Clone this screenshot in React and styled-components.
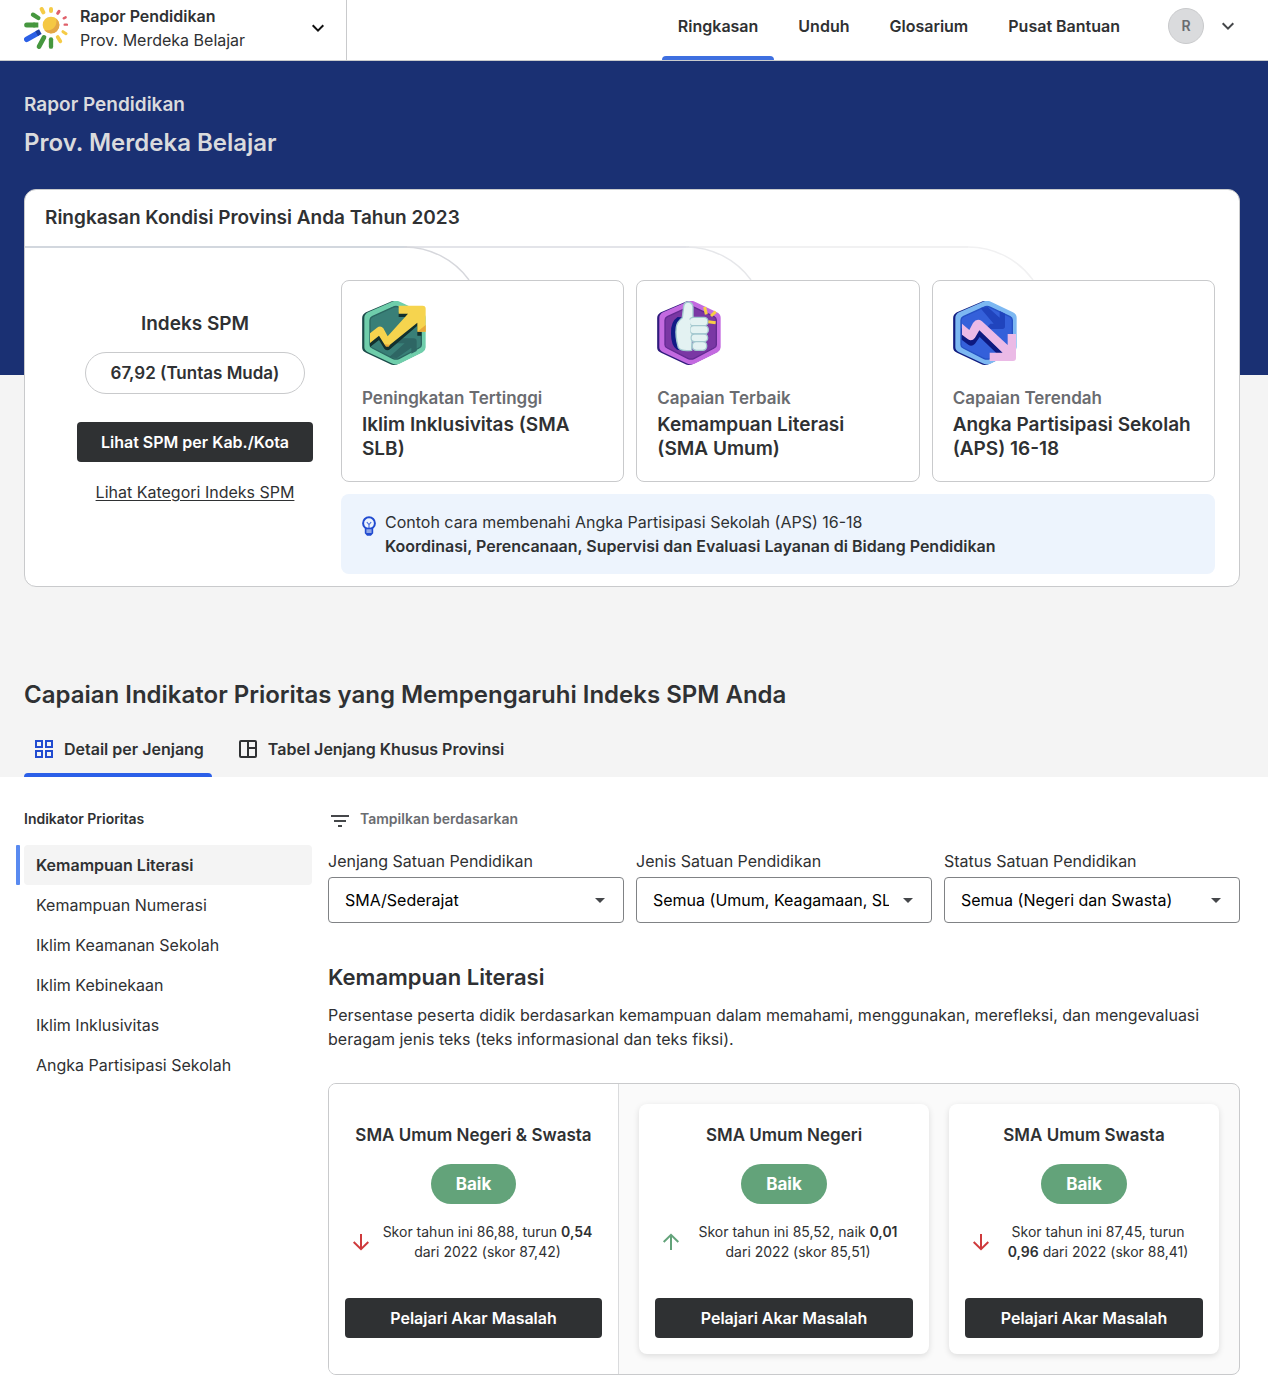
import React, {useState} from 'react';
import styled, {createGlobalStyle} from 'styled-components';

const navItems = ["Ringkasan", "Unduh", "Glosarium", "Pusat Bantuan"];

const indicators = [
    "Kemampuan Literasi",
    "Kemampuan Numerasi",
    "Iklim Keamanan Sekolah",
    "Iklim Kebinekaan",
    "Iklim Inklusivitas",
    "Angka Partisipasi Sekolah",
];

const filters = [
    {id: "jenjang", label: "Jenjang Satuan Pendidikan", options: ["SMA/Sederajat"]},
    {id: "jenis", label: "Jenis Satuan Pendidikan", options: ["Semua (Umum, Keagamaan, SLB)"]},
    {id: "status", label: "Status Satuan Pendidikan", options: ["Semua (Negeri dan Swasta)"]},
];

const Logo = () => (
    <svg width="44" height="43" viewBox="0 0 132 129" fill="none" aria-hidden="true">
        <g stroke="#46973f">
            <path d="M8 54H30" strokeWidth="15" strokeLinecap="round" />
            <path d="M28 54H43" strokeWidth="15" />
            <path d="M27 23L43 33" strokeWidth="13" strokeLinecap="round" />
            <path d="M45 119L60 91" strokeWidth="14" strokeLinecap="round" />
            <path d="M81 119V97" strokeWidth="13" strokeLinecap="round" />
        </g>
        <path d="M8 97L40 79" stroke="#2c60e6" strokeWidth="16" strokeLinecap="round" />
        <path d="M38 80L49 74" stroke="#1b3fa6" strokeWidth="16" />
        <g stroke="#f5cb46" strokeLinecap="round">
            <path d="M53 6L58 16" strokeWidth="12" />
            <path d="M81 6V12" strokeWidth="12" />
            <path d="M109 103L101 90" strokeWidth="11" />
            <path d="M126 80L117 74" strokeWidth="9" />
        </g>
        <g stroke="#e0606a" strokeLinecap="round">
            <path d="M105 13L101 19" strokeWidth="9" />
            <path d="M125 31L119 34" strokeWidth="7" />
            <path d="M129 53H122" strokeWidth="7" />
        </g>
        <circle cx="81" cy="54" r="25" fill="#f5c843" />
        <path d="M97 35A25 25 0 1 1 61 69C86 74 100 58 97 35Z" fill="#e3a646" />
    </svg>
);

const Chevron = ({color}) => (
    <svg width="24" height="24" viewBox="0 0 24 24" fill="none" stroke={color} strokeWidth="2" aria-hidden="true">
        <path d="M6.7 9.3L12 14.6L17.3 9.3" />
    </svg>
);

const HEX = "M92 6Q102 1 112 6L178 37Q187 41 187 50V139Q187 146 180 150L112 184Q102 189 92 184L20 150Q11 146 11 139V50Q11 42 20 37Z";

const HexBase = ({back, rim, line, fill, children}) => (
    <svg width="64" height="64" viewBox="0 0 192 192" fill="none" aria-hidden="true">
        <path d={HEX} transform="translate(-6 1)" fill={back} stroke={back} strokeWidth="9" />
        <path d={HEX} fill={rim} stroke={rim} strokeWidth="8" />
        <path d="M92 19Q102 14 112 19L171 47Q178 51 178 58V131Q178 138 171 141L112 172Q102 177 92 172L31 141Q24 138 24 131V58Q24 51 31 47Z" fill={fill} stroke={line} strokeWidth="4" />
        {children}
    </svg>
);

const RiseBadge = () => (
    <HexBase back="#1b4a49" rim="#6fceab" line="#2b6661" fill="#397f77">
        <path d="M82 168L128 127H104L112 112H155Q164 112 164 121V150L148 158V140L104 172Z" fill="#2e6664" />
        <path d="M24 110L50 92L62 93L77 120L138 62V48H110V34H178V104H166V74L84 145Q75 152 67 143L51 117L24 138Z" fill="#12302e" />
        <path d="M24 97L45 80Q56 72 64 82L77 106L138 38H110V14H182Q191 14 191 23V92H166V65L84 131Q74 139 67 130L51 104L24 126Z" fill="#f6d44e" />
        <path d="M166 92L191 72V92Z" fill="#e8a83a" />
        <path d="M67 130L84 131L80 137H72Z" fill="#e8a83a" />
    </HexBase>
);

const BestBadge = () => (
    <HexBase back="#2f1b7c" rim="#c36ae0" line="#632a92" fill="#7a37a4">
        <path d="M62 48Q40 62 42 98Q42 134 60 146L90 150V50Z" fill="#111b86" />
        <g fill="#e3f2f2" stroke="#a3c8cf" strokeWidth="4">
            <path d="M80 16Q82 3 94 3Q106 4 108 18V48L104 148Q72 152 64 140Q54 104 58 78Q60 62 76 50Z" />
            <rect x="97" y="49" width="56" height="25" rx="12" />
            <rect x="99" y="74" width="55" height="25" rx="12" />
            <rect x="102" y="99" width="50" height="23" rx="11" />
            <rect x="106" y="122" width="43" height="26" rx="12" />
        </g>
        <path d="M84 50L100 56V140L74 138Q62 100 84 50Z" fill="#e3f2f2" />
        <g stroke="#f6cf45" strokeWidth="9">
            <path d="M143 18L148 40" />
            <path d="M176 32L162 45" />
            <path d="M154 62L176 65" />
        </g>
    </HexBase>
);

const LowBadge = () => (
    <HexBase back="#111c80" rim="#7db8f2" line="#2450c4" fill="#3460da">
        <path d="M82 21L104 18L140 50V30L156 38V76Q156 84 148 84H96L112 68H122Z" fill="#2044bd" />
        <path d="M26 82L52 104L79 82L152 158H132L80 108L66 128Q56 138 46 131L26 116Z" fill="#0d1980" />
        <path d="M27 68L49 87L60 66Q72 50 87 61L164 132V99H189V171Q189 180 180 180H110V155H149L79 88L66 110Q57 122 45 115L27 101Z" fill="#ebbae6" />
    </HexBase>
);

const RailLines = () => (
    <Rails width="1020" height="34" viewBox="0 0 1020 34" fill="none" aria-hidden="true">
        <path d="M660 1H943" stroke="#f1f1f2" strokeWidth="2" />
        <path d="M378 1H664" stroke="#e3e4e9" strokeWidth="2" />
        <path d="M0 1H382" stroke="#d2d7de" strokeWidth="2" />
        <path d="M379 1A80 80 0 0 1 444 34" stroke="#d6d7dc" strokeWidth="1.5" />
        <path d="M661 1A80 80 0 0 1 726 34" stroke="#e6e7ea" strokeWidth="1.5" />
        <path d="M943 1A80 80 0 0 1 1008 34" stroke="#f1f1f2" strokeWidth="1.5" />
    </Rails>
);

const BulbIcon = () => (
    <svg width="16" height="20" viewBox="0 0 16 20" fill="none" aria-hidden="true">
        <circle cx="8" cy="7.2" r="5.9" stroke="#214bd0" strokeWidth="2" />
        <path d="M5.8 6L8 8.6L10.2 6M8 8.6V12" stroke="#4468d8" strokeWidth="1.1" />
        <path d="M4.6 12.5H11.4V17L9.6 19H6.4L4.6 17Z" fill="#8fa5e6" stroke="#214bd0" strokeWidth="1.6" />
        <path d="M5 17H11L9.6 19H6.4Z" fill="#214bd0" />
    </svg>
);

const GridIcon = () => (
    <svg width="24" height="24" viewBox="0 0 24 24" fill="none" stroke="#214bd0" strokeWidth="2" aria-hidden="true">
        <rect x="4" y="4" width="6" height="6" />
        <rect x="14" y="4" width="6" height="6" />
        <rect x="4" y="14" width="6" height="6" />
        <rect x="14" y="14" width="6" height="6" />
    </svg>
);

const TableIcon = () => (
    <svg width="24" height="24" viewBox="0 0 24 24" fill="none" stroke="#2f3133" strokeWidth="2" aria-hidden="true">
        <rect x="4" y="4" width="16" height="16" rx="1" />
        <path d="M12 4V20M12 11H20" />
    </svg>
);

const FilterIcon = () => (
    <svg width="24" height="24" viewBox="0 0 24 24" fill="none" stroke="#45474a" strokeWidth="2" aria-hidden="true">
        <path d="M3 9H21M6 14H18M10 19H14" />
    </svg>
);

const TrendIcon = ({up}) => (
    <svg width="24" height="24" viewBox="0 0 24 24" fill="none" stroke={up ? "#63a37a" : "#cf3a3c"} strokeWidth="2" aria-hidden="true">
        {up ? <path d="M12 20V5M4.7 12L12 4.8L19.3 12" /> : <path d="M12 4V19M4.7 12L12 19.2L19.3 12" />}
    </svg>
);

const highlights = [
    {icon: <RiseBadge />, label: "Peningkatan Tertinggi", title: "Iklim Inklusivitas (SMA SLB)"},
    {icon: <BestBadge />, label: "Capaian Terbaik", title: "Kemampuan Literasi (SMA Umum)"},
    {icon: <LowBadge />, label: "Capaian Terendah", title: "Angka Partisipasi Sekolah (APS) 16-18"},
];

const ScoreContent = ({title, up, before, diff, after}) => (
    <>
        <ScoreTitle>{title}</ScoreTitle>
        <ScoreBadge>Baik</ScoreBadge>
        <ScoreRow>
            <TrendIcon up={up} />
            <ScoreText>{before} <strong>{diff}</strong> {after}</ScoreText>
        </ScoreRow>
        <DarkButton type="button">Pelajari Akar Masalah</DarkButton>
    </>
);

const App = () => {
    const [indicator, setIndicator] = useState(indicators[0]);
    const [tab, setTab] = useState("detail");

    return (
        <>
            <GlobalStyle />
            <Header>
                <Switcher type="button">
                    <Logo />
                    <SwitcherText>
                        <strong>Rapor Pendidikan</strong>
                        <span>Prov. Merdeka Belajar</span>
                    </SwitcherText>
                    <Chevron color="#111111" />
                </Switcher>
                <Nav>
                    {navItems.map((item, i) => (
                        <NavLink href="#" key={item} $active={i === 0}>{item}</NavLink>
                    ))}
                </Nav>
                <Account type="button" aria-label="Akun">
                    <Avatar>R</Avatar>
                    <Chevron color="#45474a" />
                </Account>
            </Header>

            <Top>
                <HeroLabel>Rapor Pendidikan</HeroLabel>
                <HeroTitle>Prov. Merdeka Belajar</HeroTitle>

                <Summary>
                    <SummaryTitle>Ringkasan Kondisi Provinsi Anda Tahun 2023</SummaryTitle>
                    <SummaryBody>
                        <RailLines />
                        <IndexColumn>
                            <IndexTitle>Indeks SPM</IndexTitle>
                            <IndexPill>67,92 (Tuntas Muda)</IndexPill>
                            <DarkButton type="button">Lihat SPM per Kab./Kota</DarkButton>
                            <IndexLink href="#">Lihat Kategori Indeks SPM</IndexLink>
                        </IndexColumn>
                        <Highlights>
                            {highlights.map((h) => (
                                <HighlightCard key={h.label}>
                                    {h.icon}
                                    <HighlightLabel>{h.label}</HighlightLabel>
                                    <HighlightTitle>{h.title}</HighlightTitle>
                                </HighlightCard>
                            ))}
                            <Tip>
                                <BulbIcon />
                                <p>
                                    Contoh cara membenahi Angka Partisipasi Sekolah (APS) 16-18<br />
                                    <strong>Koordinasi, Perencanaan, Supervisi dan Evaluasi Layanan di Bidang Pendidikan</strong>
                                </p>
                            </Tip>
                        </Highlights>
                    </SummaryBody>
                </Summary>

                <SectionTitle>Capaian Indikator Prioritas yang Mempengaruhi Indeks SPM Anda</SectionTitle>
                <Tabs role="tablist">
                    <Tab type="button" role="tab" aria-selected={tab === "detail"} $active={tab === "detail"} onClick={() => setTab("detail")}>
                        <GridIcon />
                        Detail per Jenjang
                    </Tab>
                    <Tab type="button" role="tab" aria-selected={tab === "tabel"} $active={tab === "tabel"} onClick={() => setTab("tabel")}>
                        <TableIcon />
                        Tabel Jenjang Khusus Provinsi
                    </Tab>
                </Tabs>
            </Top>

            <Content>
                <aside>
                    <SmallTitle>Indikator Prioritas</SmallTitle>
                    <IndicatorList>
                        {indicators.map((name) => (
                            <li key={name}>
                                <IndicatorButton type="button" $active={name === indicator} onClick={() => setIndicator(name)}>
                                    {name}
                                </IndicatorButton>
                            </li>
                        ))}
                    </IndicatorList>
                </aside>
                <main>
                    <FilterHeading>
                        <FilterIcon />
                        Tampilkan berdasarkan
                    </FilterHeading>
                    <Filters>
                        {filters.map((f) => (
                            <Field key={f.id}>
                                <label htmlFor={f.id}>{f.label}</label>
                                <SelectWrap>
                                    <Select id={f.id}>
                                        {f.options.map((o) => <option key={o}>{o}</option>)}
                                    </Select>
                                    <svg width="10" height="5" viewBox="0 0 10 5" aria-hidden="true">
                                        <path d="M0 0H10L5 5Z" fill="#45474a" />
                                    </svg>
                                </SelectWrap>
                            </Field>
                        ))}
                    </Filters>

                    <IndicatorTitle>Kemampuan Literasi</IndicatorTitle>
                    <Description>
                        Persentase peserta didik berdasarkan kemampuan dalam memahami, menggunakan, merefleksi, dan mengevaluasi beragam jenis teks (teks informasional dan teks fiksi).
                    </Description>

                    <ScorePanel>
                        <MainScore>
                            <ScoreContent title="SMA Umum Negeri & Swasta" before="Skor tahun ini 86,88, turun" diff="0,54" after="dari 2022 (skor 87,42)" />
                        </MainScore>
                        <SubScores>
                            <ScoreCard>
                                <ScoreContent up title="SMA Umum Negeri" before="Skor tahun ini 85,52, naik" diff="0,01" after="dari 2022 (skor 85,51)" />
                            </ScoreCard>
                            <ScoreCard>
                                <ScoreContent title="SMA Umum Swasta" before="Skor tahun ini 87,45, turun" diff="0,96" after="dari 2022 (skor 88,41)" />
                            </ScoreCard>
                        </SubScores>
                    </ScorePanel>
                </main>
            </Content>
        </>
    );
}

const GlobalStyle = createGlobalStyle`
    * {
        box-sizing: border-box;
        margin: 0;
        padding: 0;
    }
    body {
        font-family: Inter, "Liberation Sans", sans-serif;
        font-size: 16px;
        line-height: 24px;
        color: #2f3133;
        background: #ffffff;
    }
    button, select {
        font: inherit;
        color: inherit;
        border: 0;
        background: none;
        cursor: pointer;
    }
    strong {
        font-weight: 600;
    }
    svg {
        display: block;
        flex-shrink: 0;
    }
`;
const Header = styled.header`
    display: flex;
    height: 61px;
    padding-right: 28px;
    border-bottom: 1px solid #c9cacc;
`;
const Switcher = styled.button`
    display: flex;
    align-items: center;
    gap: 12px;
    width: 347px;
    padding: 0 16px 4px 24px;
    border-right: 1px solid #c9cacc;
    text-align: left;
`;
const SwitcherText = styled.span`
    display: flex;
    flex-direction: column;
    flex: 1;
`;
const Nav = styled.nav`
    display: flex;
    gap: 8px;
    margin-left: auto;
`;
const NavLink = styled.a`
    position: relative;
    display: flex;
    align-items: center;
    padding: 0 16px 8px;
    font-weight: 600;
    color: inherit;
    text-decoration: none;

    &::after {
        content: "";
        display: ${props => props.$active ? "block" : "none"};
        position: absolute;
        left: 0;
        right: 0;
        bottom: 0;
        height: 4px;
        border-radius: 4px 4px 0 0;
        background: #3e6fe0;
    }
`;
const Account = styled.button`
    display: flex;
    align-items: center;
    gap: 12px;
    margin-left: 32px;
    padding-bottom: 8px;
`;
const Avatar = styled.span`
    display: flex;
    align-items: center;
    justify-content: center;
    width: 36px;
    height: 36px;
    border: 1px solid #c9cacc;
    border-radius: 50%;
    background: #dadbdd;
    color: #6a6c70;
    font-size: 14px;
    font-weight: 600;
`;
const Top = styled.section`
    padding: 30px 28px 0 24px;
    background: linear-gradient(#1a3073 314px, #f4f4f4 314px);
`;
const HeroLabel = styled.p`
    font-size: 19px;
    line-height: 28px;
    font-weight: 600;
    color: #dadbdd;
`;
const HeroTitle = styled.h1`
    margin-top: 8px;
    font-size: 24px;
    line-height: 32px;
    font-weight: 600;
    color: #dadbdd;
`;
const Summary = styled.section`
    margin-top: 30px;
    border: 1px solid #c9cacc;
    border-radius: 12px;
    background: #ffffff;
`;
const SummaryTitle = styled.h2`
    padding: 14px 20px;
    font-size: 19px;
    line-height: 28px;
    font-weight: 600;
`;
const SummaryBody = styled.div`
    display: grid;
    grid-template-columns: 292px 1fr;
    position: relative;
    padding: 34px 24px 12px;
    overflow: hidden;
`;
const Rails = styled.svg`
    position: absolute;
    top: 0;
    left: 0;
`;
const IndexColumn = styled.div`
    display: flex;
    flex-direction: column;
    align-items: center;
    padding-top: 32px;
`;
const IndexTitle = styled.h3`
    font-size: 19px;
    line-height: 24px;
    font-weight: 600;
`;
const IndexPill = styled.span`
    margin: 16px 0 28px;
    padding: 8px 25px;
    border: 1px solid #c9cacc;
    border-radius: 21px;
    font-size: 17px;
    font-weight: 600;
`;
const DarkButton = styled.button`
    height: 40px;
    padding: 0 24px;
    border-radius: 4px;
    background: #2f3133;
    color: #ffffff;
    font-weight: 600;
`;
const IndexLink = styled.a`
    margin-top: 18px;
    color: inherit;
    text-underline-offset: 2px;
`;
const Highlights = styled.div`
    display: grid;
    grid-template-columns: repeat(3, 1fr);
    gap: 12px;
`;
const HighlightCard = styled.article`
    padding: 20px;
    border: 1px solid #c9cacc;
    border-radius: 8px;
    background: #ffffff;
`;
const HighlightLabel = styled.p`
    margin: 21px 0 3px;
    font-size: 17px;
    font-weight: 600;
    color: #6a6c70;
`;
const HighlightTitle = styled.h3`
    font-size: 19px;
    line-height: 24px;
    font-weight: 600;
`;
const Tip = styled.div`
    grid-column: 1 / -1;
    display: flex;
    gap: 8px;
    padding: 16px 20px;
    border-radius: 8px;
    background: #edf4fd;

    svg {
        margin-top: 6px;
    }
`;
const SectionTitle = styled.h2`
    margin-top: 92px;
    font-size: 24px;
    line-height: 32px;
    font-weight: 600;
`;
const Tabs = styled.div`
    display: flex;
    gap: 16px;
    margin-top: 10px;
`;
const Tab = styled.button`
    display: flex;
    align-items: center;
    gap: 8px;
    height: 56px;
    padding: 0 8px;
    font-weight: 600;
    position: relative;

    &::after {
        content: "";
        display: ${props => props.$active ? "block" : "none"};
        position: absolute;
        left: 0;
        right: 0;
        bottom: 0;
        height: 4px;
        border-radius: 4px 4px 0 0;
        background: #2b5fe8;
    }
`;
const Content = styled.div`
    display: grid;
    grid-template-columns: 288px 1fr;
    gap: 16px;
    padding: 32px 28px 16px 24px;
`;
const SmallTitle = styled.h3`
    font-size: 14px;
    line-height: 20px;
    font-weight: 600;
`;
const IndicatorList = styled.ul`
    margin-top: 16px;
    list-style: none;
`;
const IndicatorButton = styled.button`
    position: relative;
    display: block;
    width: 100%;
    padding: 8px 12px;
    border-radius: 4px;
    text-align: left;
    font-weight: ${props => props.$active ? 600 : 400};
    background: ${props => props.$active ? "#f4f4f4" : "none"};

    &::before {
        content: "";
        display: ${props => props.$active ? "block" : "none"};
        position: absolute;
        left: -8px;
        top: 0;
        bottom: 0;
        width: 4px;
        border-radius: 1px;
        background: #598af0;
    }
`;
const FilterHeading = styled.h3`
    display: flex;
    align-items: center;
    gap: 8px;
    height: 20px;
    font-size: 14px;
    line-height: 20px;
    font-weight: 600;
    color: #6a6c70;
`;
const Filters = styled.div`
    display: grid;
    grid-template-columns: repeat(3, 1fr);
    gap: 12px;
    margin-top: 20px;
`;
const Field = styled.div`
    display: flex;
    flex-direction: column;
    gap: 4px;
`;
const SelectWrap = styled.div`
    position: relative;

    svg {
        position: absolute;
        right: 19px;
        top: 21px;
        pointer-events: none;
    }
`;
const Select = styled.select`
    appearance: none;
    width: 100%;
    height: 46px;
    padding: 0 42px 0 16px;
    border: 1px solid #808285;
    border-radius: 4px;
    color: #000000;
    overflow: hidden;
`;
const IndicatorTitle = styled.h2`
    margin-top: 38px;
    font-size: 22px;
    line-height: 32px;
    font-weight: 600;
`;
const Description = styled.p`
    margin-top: 10px;
`;
const ScorePanel = styled.section`
    display: grid;
    grid-template-columns: 290fr 620fr;
    margin-top: 32px;
    border: 1px solid #c9cacc;
    border-radius: 8px;
    background: #fafafa;
    overflow: hidden;
`;
const MainScore = styled.article`
    display: flex;
    flex-direction: column;
    padding: 36px 16px;
    border-right: 1px solid #dadbdd;
    background: #ffffff;
`;
const SubScores = styled.div`
    display: grid;
    grid-template-columns: 29fr 27fr;
    gap: 20px;
    padding: 20px;
`;
const ScoreCard = styled.article`
    display: flex;
    flex-direction: column;
    padding: 16px;
    border-radius: 8px;
    background: #ffffff;
    box-shadow: 0 2px 6px rgba(0, 0, 0, 0.12);
`;
const ScoreTitle = styled.h3`
    font-size: 17px;
    line-height: 30px;
    font-weight: 600;
    text-align: center;
`;
const ScoreBadge = styled.span`
    align-self: center;
    margin-top: 14px;
    padding: 8px 25px;
    border-radius: 20px;
    background: #63a37a;
    color: #ffffff;
    font-size: 17px;
    font-weight: 700;
`;
const ScoreRow = styled.div`
    display: flex;
    align-items: center;
    margin: 18px 0 36px;
    padding-left: 4px;
`;
const ScoreText = styled.p`
    flex: 1;
    padding: 0 4px;
    font-size: 14px;
    line-height: 20px;
    text-align: center;
`;

export default App;
